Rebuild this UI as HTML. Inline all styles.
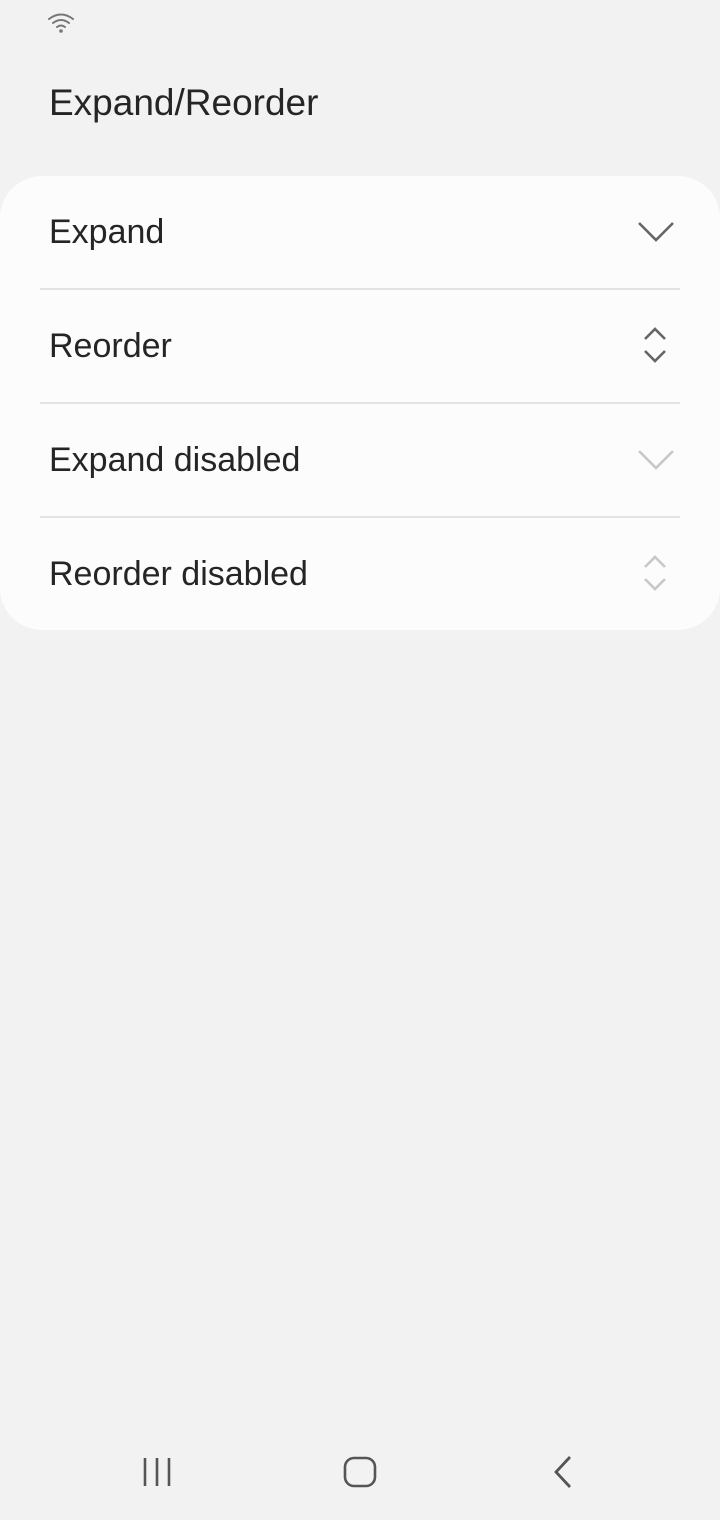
<!DOCTYPE html>
<html><head><meta charset="utf-8"><style>
*{margin:0;padding:0;box-sizing:border-box}
body{width:720px;height:1520px;background:#f2f2f2;font-family:"Liberation Sans",sans-serif;color:#252525;position:relative;overflow:hidden}
.title{position:absolute;left:49px;top:80px;font-size:37px;line-height:46px}
.card{position:absolute;left:0;top:176px;width:720px;height:454px;background:#fcfcfc;border-radius:42px}
.row{position:absolute;left:0;width:720px;height:114px}
.row span{position:absolute;left:49px;top:33px;font-size:34px;line-height:46px}
.div{position:absolute;left:40px;width:640px;height:2px;background:#e3e3e3}
svg{position:absolute}
</style></head><body>
<svg style="left:47px;top:12px" width="28" height="22" viewBox="0 0 28 22"><g fill="none" stroke="#777" stroke-width="2" stroke-linecap="round"><path d="M2 7 Q14 -2 26 7"/><path d="M6 11 Q14 5 22 11"/><path d="M10 15 Q14 12 18 15"/></g><circle cx="14" cy="19" r="1.8" fill="#777"/></svg>
<div class="title">Expand/Reorder</div>
<div class="card">
<div class="row" style="top:0"><span>Expand</span></div>
<div class="div" style="top:112px"></div>
<div class="row" style="top:114px"><span>Reorder</span></div>
<div class="div" style="top:226px"></div>
<div class="row" style="top:228px"><span>Expand disabled</span></div>
<div class="div" style="top:340px"></div>
<div class="row" style="top:342px"><span>Reorder disabled</span></div>
<svg style="left:636px;top:44px" width="40" height="24"><path d="M3 3 L20 20 L37 3" fill="none" stroke="#666" stroke-width="2.6"/></svg>
<svg style="left:642px;top:150px" width="28" height="38"><path d="M3 13 L13 3 L23 13 M3 25 L13 35 L23 25" fill="none" stroke="#666" stroke-width="2.6"/></svg>
<svg style="left:636px;top:272px" width="40" height="24"><path d="M3 3 L20 20 L37 3" fill="none" stroke="#c8c8c8" stroke-width="2.6"/></svg>
<svg style="left:642px;top:378px" width="28" height="38"><path d="M3 13 L13 3 L23 13 M3 25 L13 35 L23 25" fill="none" stroke="#c8c8c8" stroke-width="2.6"/></svg>
</div>
<svg style="left:140px;top:1456px" width="36" height="32"><g stroke="#555" stroke-width="2.6"><path d="M5 2V30M17 2V30M29 2V30"/></g></svg>
<svg style="left:342px;top:1455px" width="36" height="34"><rect x="3" y="3" width="30" height="28" rx="9" fill="none" stroke="#555" stroke-width="2.6"/></svg>
<svg style="left:550px;top:1454px" width="26" height="36"><path d="M20 3 L6 18 L20 33" fill="none" stroke="#555" stroke-width="2.8"/></svg>
</body></html>
